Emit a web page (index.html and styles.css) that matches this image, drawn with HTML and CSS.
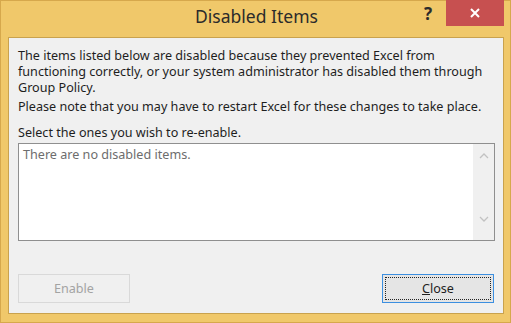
FILE: index.html
```html
<!DOCTYPE html>
<html lang="en">
    <head>
        <meta charset="UTF-8">
        <title>Disabled Items</title>
        <link rel="stylesheet" href="styles.css">
    </head>
    <body>
        <div class="window">
            <div class="titlebar">
                <div class="title">Disabled Items</div>
                <div class="help">?</div>
                <div class="close-x">
                    <svg width="12" height="12" viewBox="0 0 12 12">
                        <path d="M2 2 L10 10 M10 2 L2 10" stroke="#fff" stroke-width="2"/>
                    </svg>
                </div>
            </div>
            <div class="panel">
                <p class="msg">The items listed below are disabled because they prevented Excel from functioning correctly, or your system administrator has disabled them through Group Policy.</p>
                <p class="msg note">Please note that you may have to restart Excel for these changes to take place.</p>
                <p class="msg select">Select the ones you wish to re-enable.</p>
                <div class="listbox">
                    <div class="list-items">There are no disabled items.</div>
                    <div class="scrollbar">
                        <svg width="10" height="6" viewBox="0 0 10 6">
                            <path d="M1 5 L5 1 L9 5" fill="none" stroke="#c2c2c2" stroke-width="1.3"/>
                        </svg>
                        <svg width="10" height="6" viewBox="0 0 10 6">
                            <path d="M1 1 L5 5 L9 1" fill="none" stroke="#c2c2c2" stroke-width="1.3"/>
                        </svg>
                    </div>
                </div>
                <div class="buttons">
                    <button class="btn disabled">Enable</button>
                    <button class="btn focused"><span class="focus-rect"><u>C</u>lose</span></button>
                </div>
            </div>
        </div>
    </body>
</html>
```

FILE: styles.css
```css
body {
    margin: 0;
    padding: 0;
    font-family: "Noto Sans", "Open Sans", sans-serif;
    background-color: #f0c86a;
}

.window {
    width: 511px;
    height: 323px;
    box-sizing: border-box;
    border: 1px solid #d6a84c;
    background-color: #f0c86a;
    display: flex;
    flex-direction: column;
}

.titlebar {
    height: 36px;
    display: flex;
    align-items: flex-start;
    position: relative;
}

.title {
    flex: 1;
    text-align: center;
    font-size: 17.5px;
    color: #2b2b2b;
    padding-top: 3px;
    padding-left: 2px;
}

.help {
    position: absolute;
    left: 423px;
    top: 1px;
    font-size: 17px;
    font-weight: bold;
    color: #2b2b2b;
}

.close-x {
    position: absolute;
    left: 445px;
    top: -1px;
    width: 58px;
    height: 26px;
    background-color: #c75050;
    display: flex;
    align-items: center;
    justify-content: center;
}

.panel {
    margin: 0 6px 0 7px;
    height: 277px;
    box-sizing: border-box;
    border: 1px solid #c9a24e;
    background-color: #f0f0f0;
    padding: 10px 9px 0 9px;
    display: flex;
    flex-direction: column;
}

.msg {
    margin: 0;
    font-size: 12.6px;
    line-height: 16px;
    color: #1e1e1e;
}

.note {
    margin-top: 3px;
}

.select {
    margin-top: 10px;
}

.listbox {
    margin-top: 2px;
    width: 477px;
    height: 98px;
    box-sizing: border-box;
    border: 1px solid #8f8f8f;
    background-color: #fff;
    display: flex;
}

.list-items {
    flex: 1;
    font-size: 12.6px;
    color: #6d6d6d;
    padding: 2px 4px;
}

.scrollbar {
    width: 21px;
    background-color: #f0f0f0;
    display: flex;
    flex-direction: column;
    justify-content: space-between;
    align-items: center;
    padding: 9px 0 18px;
}

.buttons {
    margin-top: 33px;
    display: flex;
    justify-content: space-between;
    width: 476px;
}

.btn {
    width: 112px;
    height: 29px;
    font-family: "Noto Sans", "Open Sans", sans-serif;
    font-size: 12.6px;
    padding: 0;
    box-sizing: border-box;
}

.disabled {
    background-color: #f0f0f0;
    border: 1px solid #d9d9d9;
    color: #a3a3a3;
}

.focused {
    background-color: #e5e5e5;
    border: 1px solid #3c8fe0;
    color: #1e1e1e;
    padding: 2px;
}

.focus-rect {
    display: block;
    height: 100%;
    box-sizing: border-box;
    border: 1px dotted #222;
    line-height: 21px;
}
```
